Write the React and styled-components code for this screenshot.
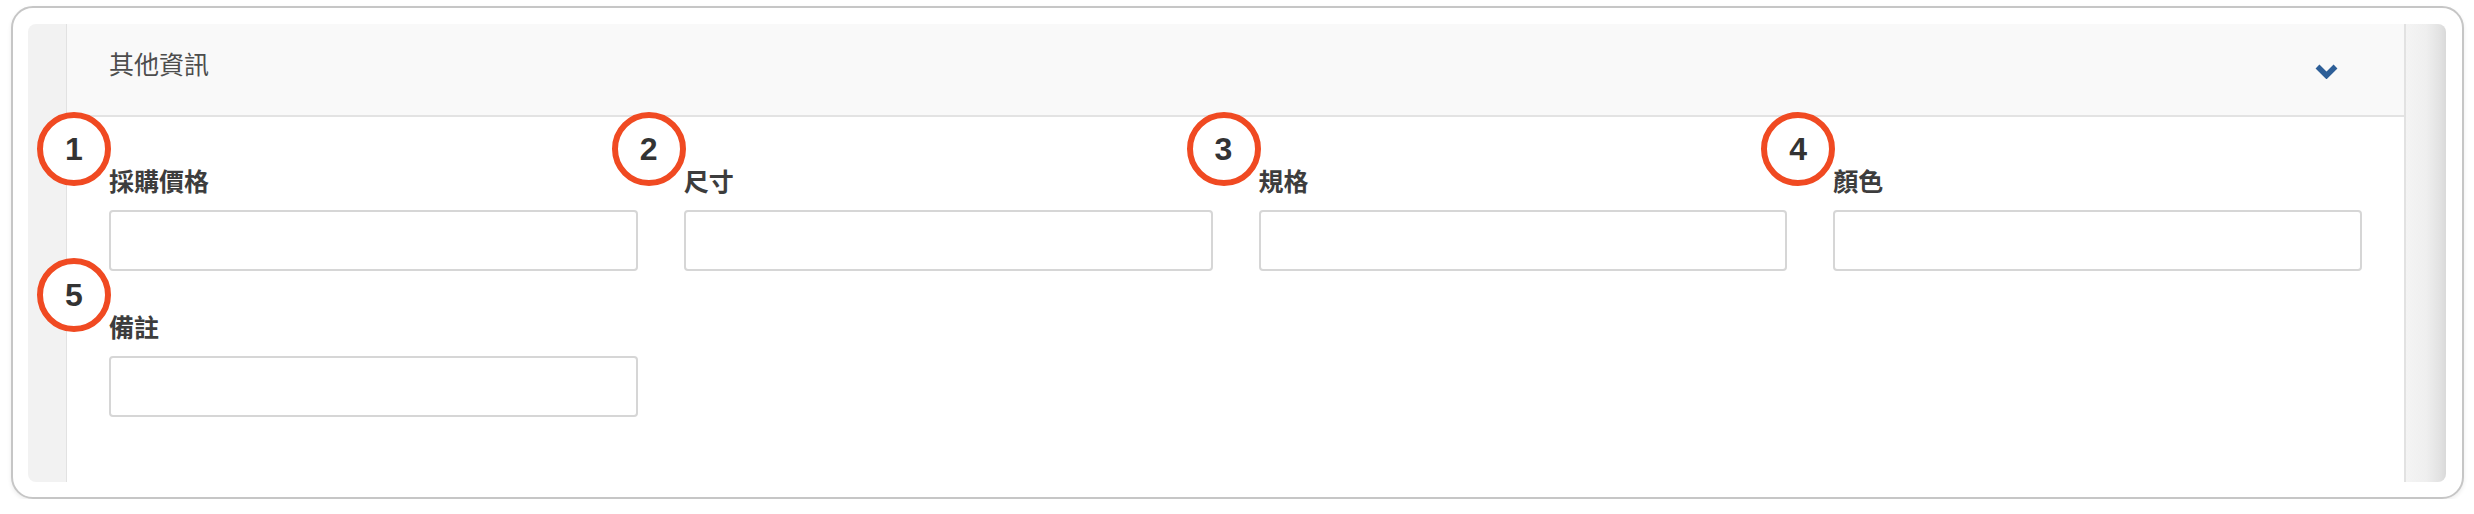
import React from "react";
import styled, { createGlobalStyle } from "styled-components";

const Global = createGlobalStyle`
  html, body { margin: 0; padding: 0; background: #ffffff; }
  body { font-family: "Noto Sans CJK TC", "Noto Sans", "Liberation Sans", sans-serif; }
  * { box-sizing: border-box; }
`;

const Page = styled.div`
  padding: 6px 10px 0 11px;
`;

const Card = styled.div`
  background: #fff;
  border: 2px solid #c6c6c6;
  border-radius: 22px;
  padding: 16px 16px 15px 15px;
  box-shadow: 0 2px 4px rgba(0, 0, 0, 0.08);
`;

const Panel = styled.div`
  display: flex;
  border-radius: 8px;
  overflow: hidden;
  height: 458px;
`;

const LeftStrip = styled.div`
  width: 39px;
  flex: none;
  background: #f2f2f2;
  border-right: 1px solid #e2e2e2;
`;

const RightStrip = styled.div`
  width: 42px;
  flex: none;
  border-left: 2px solid #e2e2e2;
  background: linear-gradient(to right, #f4f4f4 0%, #efefef 50%, #e2e2e2 85%, #d9d9d9 100%);
`;

const Main = styled.div`
  flex: 1;
  display: flex;
  flex-direction: column;
  min-width: 0;
  background: #fff;
`;

const Header = styled.div`
  height: 93px;
  flex: none;
  display: flex;
  align-items: flex-start;
  justify-content: space-between;
  padding: 0 65px 0 42px;
  background: #f9f9f9;
  border-bottom: 2px solid #e3e3e3;
`;

const Title = styled.div`
  margin-top: 24px;
  font-size: 25px;
  line-height: 30px;
  color: #4d4d4d;
  font-weight: 400;
`;

const Chevron = styled.svg`
  margin-top: 39px;
  width: 25px;
  height: 16px;
  display: block;
`;

const Body = styled.div`
  position: relative;
  padding: 48px 42px 0 42px;
  display: grid;
  grid-template-columns: repeat(4, 1fr);
  column-gap: 46px;
  row-gap: 40px;
`;

const Field = styled.div`
  position: relative;
  display: flex;
  flex-direction: column;
`;

const Label = styled.label`
  font-size: 25px;
  line-height: 30px;
  height: 30px;
  font-weight: 700;
  color: #3d3d3d;
  margin-bottom: 15px;
`;

const Input = styled.input`
  height: 61px;
  width: 100%;
  border: 2px solid #d6d6d6;
  border-radius: 4px;
  background: #fff;
  outline: none;
  font-size: 22px;
  padding: 0 12px;
`;

const Badge = styled.div`
  position: absolute;
  left: -72px;
  top: -53px;
  width: 74px;
  height: 74px;
  border-radius: 50%;
  border: 6px solid #f04a22;
  background: #fff;
  display: flex;
  align-items: center;
  justify-content: center;
  font-family: "Liberation Sans", Arial, sans-serif;
  font-weight: 700;
  font-size: 32px;
  color: #333;
  z-index: 2;
`;

const fields = [
  { n: 1, label: "採購價格" },
  { n: 2, label: "尺寸" },
  { n: 3, label: "規格" },
  { n: 4, label: "顏色" },
  { n: 5, label: "備註" },
];

export default function App() {
  return (
    <>
      <Global />
      <Page>
        <Card>
          <Panel>
            <LeftStrip />
            <Main>
              <Header>
                <Title>其他資訊</Title>
                <Chevron viewBox="0 0 25 16">
                  <path d="M3.5 3.5 L12.5 12.5 L21.5 3.5" fill="none" stroke="#2e5f98" strokeWidth="5.5" strokeLinecap="butt" strokeLinejoin="miter" />
                </Chevron>
              </Header>
              <Body>
                {fields.map((f) => (
                  <Field key={f.n}>
                    <Badge>{f.n}</Badge>
                    <Label>{f.label}</Label>
                    <Input type="text" />
                  </Field>
                ))}
              </Body>
            </Main>
            <RightStrip />
          </Panel>
        </Card>
      </Page>
    </>
  );
}
